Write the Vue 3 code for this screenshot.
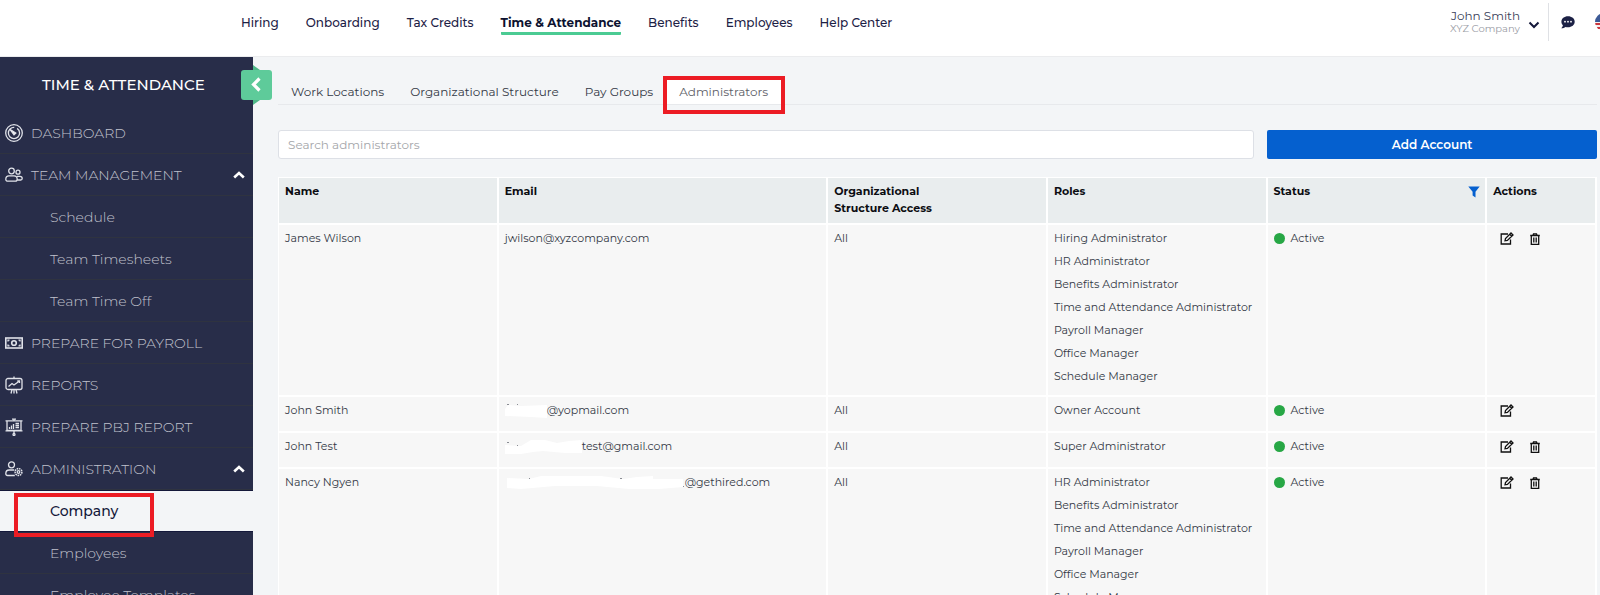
<script setup>
const topLinks = ['Hiring', 'Onboarding', 'Tax Credits', 'Time & Attendance', 'Benefits', 'Employees', 'Help Center']
const activeTop = 'Time & Attendance'

const menu = [
  { label: 'DASHBOARD', icon: 'gauge' },
  { label: 'TEAM MANAGEMENT', icon: 'team', open: true },
  { label: 'Schedule', sub: true },
  { label: 'Team Timesheets', sub: true },
  { label: 'Team Time Off', sub: true },
  { label: 'PREPARE FOR PAYROLL', icon: 'cash' },
  { label: 'REPORTS', icon: 'chart' },
  { label: 'PREPARE PBJ REPORT', icon: 'board' },
  { label: 'ADMINISTRATION', icon: 'admin', open: true },
  { label: 'Company', sub: true, active: true },
  { label: 'Employees', sub: true },
  { label: 'Employee Templates', sub: true },
]

const tabs = ['Work Locations', 'Organizational Structure', 'Pay Groups', 'Administrators']
const activeTab = 'Administrators'

const rows = [
  {
    name: 'James Wilson',
    email: 'jwilson@xyzcompany.com',
    roles: ['Hiring Administrator', 'HR Administrator', 'Benefits Administrator', 'Time and Attendance Administrator', 'Payroll Manager', 'Office Manager', 'Schedule Manager'],
    removable: true,
  },
  { name: 'John Smith', mask: 'short', email: '@yopmail.com', roles: ['Owner Account'], removable: false },
  { name: 'John Test', mask: 'medium', email: 'test@gmail.com', roles: ['Super Administrator'], removable: true },
  {
    name: 'Nancy Ngyen',
    mask: 'long',
    email: '@gethired.com',
    roles: ['HR Administrator', 'Benefits Administrator', 'Time and Attendance Administrator', 'Payroll Manager', 'Office Manager', 'Schedule Manager'],
    removable: true,
  },
]

const masks = {
  short: { w: 42, d: 'M0 14V7L3 3L16 4L42 3V16L26 15Z', specks: 'M2 2.500h2M12 2.500h1' },
  medium: { w: 77, d: 'M0 16V7L16 8L26 2L40 2L52 5L64 3L77 2V15L60 15L38 13L28 14L16 16Z', specks: 'M2 4.500h2M12 7.500h1' },
  long: { w: 180, d: 'M2 14V4L24 5L36 2H96L118 5L132 3L148 2V5L178 5V13L154 15L124 15L92 12L50 12L16 15Z', specks: 'M24 4.500h1M115 4.500h2M178 12.500h1' },
}
</script>

<template>
  <div class="page">
    <header class="topbar">
      <nav class="topnav">
        <a v-for="l in topLinks" :key="l" href="#" :class="{ current: l === activeTop }">{{ l }}</a>
      </nav>
      <div class="account">
        <button class="user" type="button">
          <span class="who">
            <span class="person">John Smith</span>
            <span class="firm">XYZ Company</span>
          </span>
          <svg class="down" width="12" height="8" viewBox="0 0 12 8"><path d="M1.500 1.500L6 6L10.500 1.500" fill="none" stroke="#14183a" stroke-width="2" /></svg>
        </button>
        <button class="chat" type="button" aria-label="Messages">
          <svg width="14" height="13" viewBox="0 0 14 13">
            <path d="M7 .3C3.200.3.4 2.700.4 5.700c0 1.400.6 2.600 1.500 3.500C1.700 10.400.9 11.600.2 12.300c1.600.1 3.200-.5 4.300-1.400.8.200 1.600.3 2.500.3 3.800 0 6.700-2.500 6.700-5.500S10.800.3 7 .3Z" fill="#1c2145" />
            <circle cx="4" cy="5.700" r=".9" fill="#fff" /><circle cx="7" cy="5.700" r=".9" fill="#fff" /><circle cx="10" cy="5.700" r=".9" fill="#fff" />
          </svg>
        </button>
        <button class="flag" type="button" aria-label="Language">
          <svg width="18" height="18" viewBox="0 0 18 18">
            <clipPath id="disc"><circle cx="9" cy="9" r="9" /></clipPath>
            <g clip-path="url(#disc)">
              <rect width="18" height="18" fill="#f4f0f2" />
              <path d="M0 11h18M0 15h18M8 3h10M8 7h10" stroke="#c9373d" stroke-width="2" />
              <rect width="9" height="9" fill="#3c5a97" />
            </g>
          </svg>
        </button>
      </div>
    </header>

    <div class="body">
      <aside class="sidebar">
        <h2>TIME &amp; ATTENDANCE</h2>
        <button class="collapse" type="button" aria-label="Collapse menu">
          <svg width="31" height="40" viewBox="0 0 31 40">
            <path d="M12 0L19 5H12ZM12 40L19 35H12Z" fill="#4fb888" />
            <rect y="5" width="31" height="30" rx="3" fill="#5ecb9a" />
            <path d="M18.500 13.500L12.500 19.500L18.500 25.500" fill="none" stroke="#fff" stroke-width="3.200" />
          </svg>
        </button>
        <nav class="menu">
          <a v-for="m in menu" :key="m.label" href="#" :class="{ sub: m.sub, active: m.active }">
            <svg v-if="m.icon" class="ico" width="18" height="18" viewBox="0 0 18 18">
              <g v-if="m.icon === 'gauge'">
                <circle cx="9" cy="9" r="8.300" /><circle cx="9" cy="9" r="5.600" stroke-dasharray="26 3 6 0" />
                <path d="M4.800 5.200L10.800 9L9 10.800Z" fill="#fff" />
              </g>
              <g v-else-if="m.icon === 'team'">
                <circle cx="6.500" cy="5" r="2.800" /><circle cx="13" cy="6.200" r="2" />
                <path d="M.8 13.200c0-2.400 1.600-3.400 3.200-3.400h5c1.800 0 3.200 1 3.200 3.400 0 1.600-1 2-2 2H2.800c-1 0-2-.4-2-2ZM12 10.300h3c1.400 0 2.200.9 2.200 2.200 0 1-.6 1.500-1.500 1.500h-3" />
              </g>
              <g v-else-if="m.icon === 'cash'">
                <rect x=".8" y="4" width="16.400" height="10" stroke-width="1.600" /><circle cx="9" cy="9" r="2.300" stroke-width="1.600" />
                <path d="M3 7.500V6.200H4.500M15 7.500V6.200H13.500M3 10.500v1.300h1.500M15 10.500v1.300h-1.500" />
              </g>
              <g v-else-if="m.icon === 'chart'">
                <rect x="1" y="2.500" width="16" height="11" rx="2" /><path d="M3.500 10.500L7 7.500L9 9L14.500 5M12.300 5h2.200v2M9 .6v2M7 13.500L6 17.500M9 13.500v4M11 13.500l1 4" />
              </g>
              <g v-else-if="m.icon === 'board'">
                <path d="M.5 2.800h17M2 3v9.500h14V3M.5 12.800h17M9 .5v2M9 13v3M7 1.200h4M10.500 5.500h3.500M10.500 7.500h3.500M10.500 9.500h3.500M4.500 11V9M6.500 11V7.500M8.500 11V6" /><circle cx="9" cy="16.500" r="1" />
              </g>
              <g v-else>
                <circle cx="6.500" cy="4.800" r="3" /><path d="M9.800 15.500H2.500c-1 0-1.700-.6-1.700-1.700 0-2.600 1.500-3.800 3.400-3.800h5" />
                <circle cx="13.500" cy="12" r="3.400" stroke-dasharray="1.600 .7" stroke-width="1.500" /><circle cx="13.500" cy="12" r="1.300" />
              </g>
            </svg>
            <span>{{ m.label }}</span>
            <svg v-if="m.open" class="caret" width="12" height="8" viewBox="0 0 12 8"><path d="M1.200 6.500L6 2L10.800 6.500" fill="none" stroke="#fff" stroke-width="2.600" /></svg>
            <i v-if="m.active" class="callout"></i>
          </a>
        </nav>
      </aside>

      <main class="content">
        <nav class="tabs">
          <a v-for="t in tabs" :key="t" href="#" :class="{ on: t === activeTab }">{{ t }}<i v-if="t === activeTab" class="callout"></i></a>
        </nav>
        <div class="tools">
          <input type="text" placeholder="Search administrators" aria-label="Search administrators" />
          <button type="button" class="add">Add Account</button>
        </div>
        <table>
          <colgroup><col class="w2" /><col class="w3" /><col class="w2" /><col class="w2" /><col class="w2" /><col class="w1" /></colgroup>
          <thead>
            <tr>
              <th>Name</th>
              <th>Email</th>
              <th>Organizational<br />Structure Access</th>
              <th>Roles</th>
              <th>
                <div class="status-head">
                  Status
                  <button type="button" aria-label="Filter by status">
                    <svg width="12" height="12" viewBox="0 0 12 12"><path d="M.3.5H11.700L7.500 5.700V11.500L4.600 9.500V5.700Z" fill="#0560cf" /></svg>
                  </button>
                </div>
              </th>
              <th>Actions</th>
            </tr>
          </thead>
          <tbody>
            <tr v-for="r in rows" :key="r.name">
              <td>{{ r.name }}</td>
              <td>
                <div class="email">
                  <svg v-if="r.mask" :width="masks[r.mask].w" height="18">
                    <path :d="masks[r.mask].d" fill="#fff" />
                    <path :d="masks[r.mask].specks" stroke="#8a8d94" />
                  </svg>{{ r.email }}
                </div>
              </td>
              <td>All</td>
              <td><ul><li v-for="x in r.roles" :key="x">{{ x }}</li></ul></td>
              <td><div class="status"><i></i>Active</div></td>
              <td>
                <div class="actions">
                  <button type="button" aria-label="Edit">
                    <svg width="14" height="13" viewBox="0 0 14 13"><path d="M8 2H1.200V12H10.500V7.500M5 8.800L5.500 6.500L11 1L13 3L7.400 8.400ZM9.800 2.300L11.700 4.200" fill="none" stroke="#111" stroke-width="1.300" /></svg>
                  </button>
                  <button v-if="r.removable" type="button" aria-label="Delete">
                    <svg width="10" height="12" viewBox="0 0 10 12"><path d="M.2 2.500H9.800M3 2.200L3.500.8H6.500L7 2.200M1.300 2.500V11.300H8.700V2.500M3.800 4.500V9.500M6.200 4.500V9.500" fill="none" stroke="#111" stroke-width="1.300" /></svg>
                  </button>
                </div>
              </td>
            </tr>
          </tbody>
        </table>
      </main>
    </div>
  </div>
</template>

<style>
html, body { overflow: hidden; }
</style>

<style scoped>
.page {
  height: 100vh;
  overflow: hidden;
  display: flex;
  flex-direction: column;
  background: #f3f5f7;
  font-family: Montserrat, Inter, sans-serif;
  font-size: 11px;
  color: #343946;
}
a { color: inherit; text-decoration: none; }
button { border: 0; padding: 0; background: none; font: inherit; color: inherit; display: flex; align-items: center; }
svg { display: block; flex: none; }

.topbar {
  flex: none;
  height: 56px;
  background: #fff;
  display: flex;
  justify-content: space-between;
}
.topnav { display: flex; gap: 27px; padding: 12px 0 0 241px; font-size: 12px; font-weight: 500; color: #1c2145; }
.topnav a { height: 20px; line-height: 21px; border-bottom: 3px solid transparent; white-space: nowrap; }
.topnav .current { font-weight: 700; border-color: #4bcb93; color: #0d1230; border-radius: 1px; }
.account { display: flex; overflow: hidden; }
.user { height: 38px; margin-top: 3px; gap: 8px; padding-right: 8px; border-right: 1px solid #dfe1e5; }
.who { display: flex; flex-direction: column; text-align: right; }
.person { font-size: 12px; line-height: 14px; color: #3a3f5a; }
.firm { font-size: 10px; line-height: 12px; color: #9a9ca5; }
.down { margin-top: 6px; }
.chat { height: 44px; margin: 0 20px 0 12px; }
.flag { height: 44px; margin-right: -13px; }

.body { flex: 1; display: flex; min-height: 0; border-top: 1px solid #ebecee; }
.sidebar {
  position: relative;
  flex: none;
  width: 253px;
  background: #282d49;
  color: #c0c2cd;
}
h2 { margin: 0; height: 55px; line-height: 55px; padding-left: 42px; font-size: 15px; font-weight: 500; color: #fff; }
.collapse { position: absolute; left: 241px; top: 8px; z-index: 1; }
.menu a {
  position: relative;
  display: flex;
  align-items: center;
  gap: 8px;
  height: 42px;
  box-sizing: border-box;
  padding: 0 8px 0 5px;
  border-bottom: 1px solid #2f3340;
  font-size: 14px;
  font-weight: 300;
}
.menu .sub { padding-left: 50px; }
.menu .active { background: #f3f5f7; color: #14183a; font-weight: 500; border-top: 1px solid #14183a; border-bottom-color: #14183a; }
.ico { fill: none; stroke: #e0e2e9; stroke-width: 1.3; }
.caret { margin-left: auto; }
.callout { position: absolute; border: 4px solid #ec1c24; }
.menu .callout { left: 14px; top: 2px; width: 132px; height: 36px; }

.content { flex: 1; min-width: 0; padding: 23px 3px 0 25px; }
.tabs { display: flex; height: 24px; border-bottom: 1px solid #e7e9ec; }
.tabs a { position: relative; line-height: 24px; padding: 0 13px; font-size: 12px; }
.tabs .on { background: #fff; color: #5d6068; }
.tabs .callout { inset: -4px -4px -10px -3px; }
.tools { display: flex; gap: 13px; margin: 25px 0 18px; }
input {
  flex: 1;
  min-width: 0;
  height: 29px;
  box-sizing: border-box;
  border: 1px solid #dde0e6;
  border-radius: 3px;
  background: #fff;
  padding: 0 9px;
  font: inherit;
  font-size: 12px;
}
input::placeholder { color: #a4a6aa; }
.add { width: 25%; justify-content: center; background: #0560cf; color: #fff; font-size: 12px; font-weight: 600; border-radius: 2px; }

table { width: 100%; table-layout: fixed; border-collapse: separate; border-spacing: 0; border-left: 1px solid #fff; border-top: 1px solid #fff; }
.w1 { width: 8.33%; }
.w2 { width: 16.66%; }
.w3 { width: 25%; }
th, td { text-align: left; vertical-align: top; border-right: 2px solid #fff; border-bottom: 2px solid #fff; box-sizing: border-box; }
th { height: 47px; padding: 5px 5px 0 6px; line-height: 17px; font-weight: 700; color: #0c0d12; background: #e9edee; }
td { height: 36px; padding: 2px 6px 7px; line-height: 23px; background: #f7f7f7; white-space: nowrap; }
ul { margin: 0; padding: 0; list-style: none; }
.status-head { display: flex; justify-content: space-between; }
.email, .status, .actions { display: flex; align-items: center; height: 23px; }
.status { gap: 6px; }
.status i { width: 11px; height: 11px; border-radius: 50%; background: #27a745; }
.actions { gap: 16px; padding-left: 7px; }
</style>
